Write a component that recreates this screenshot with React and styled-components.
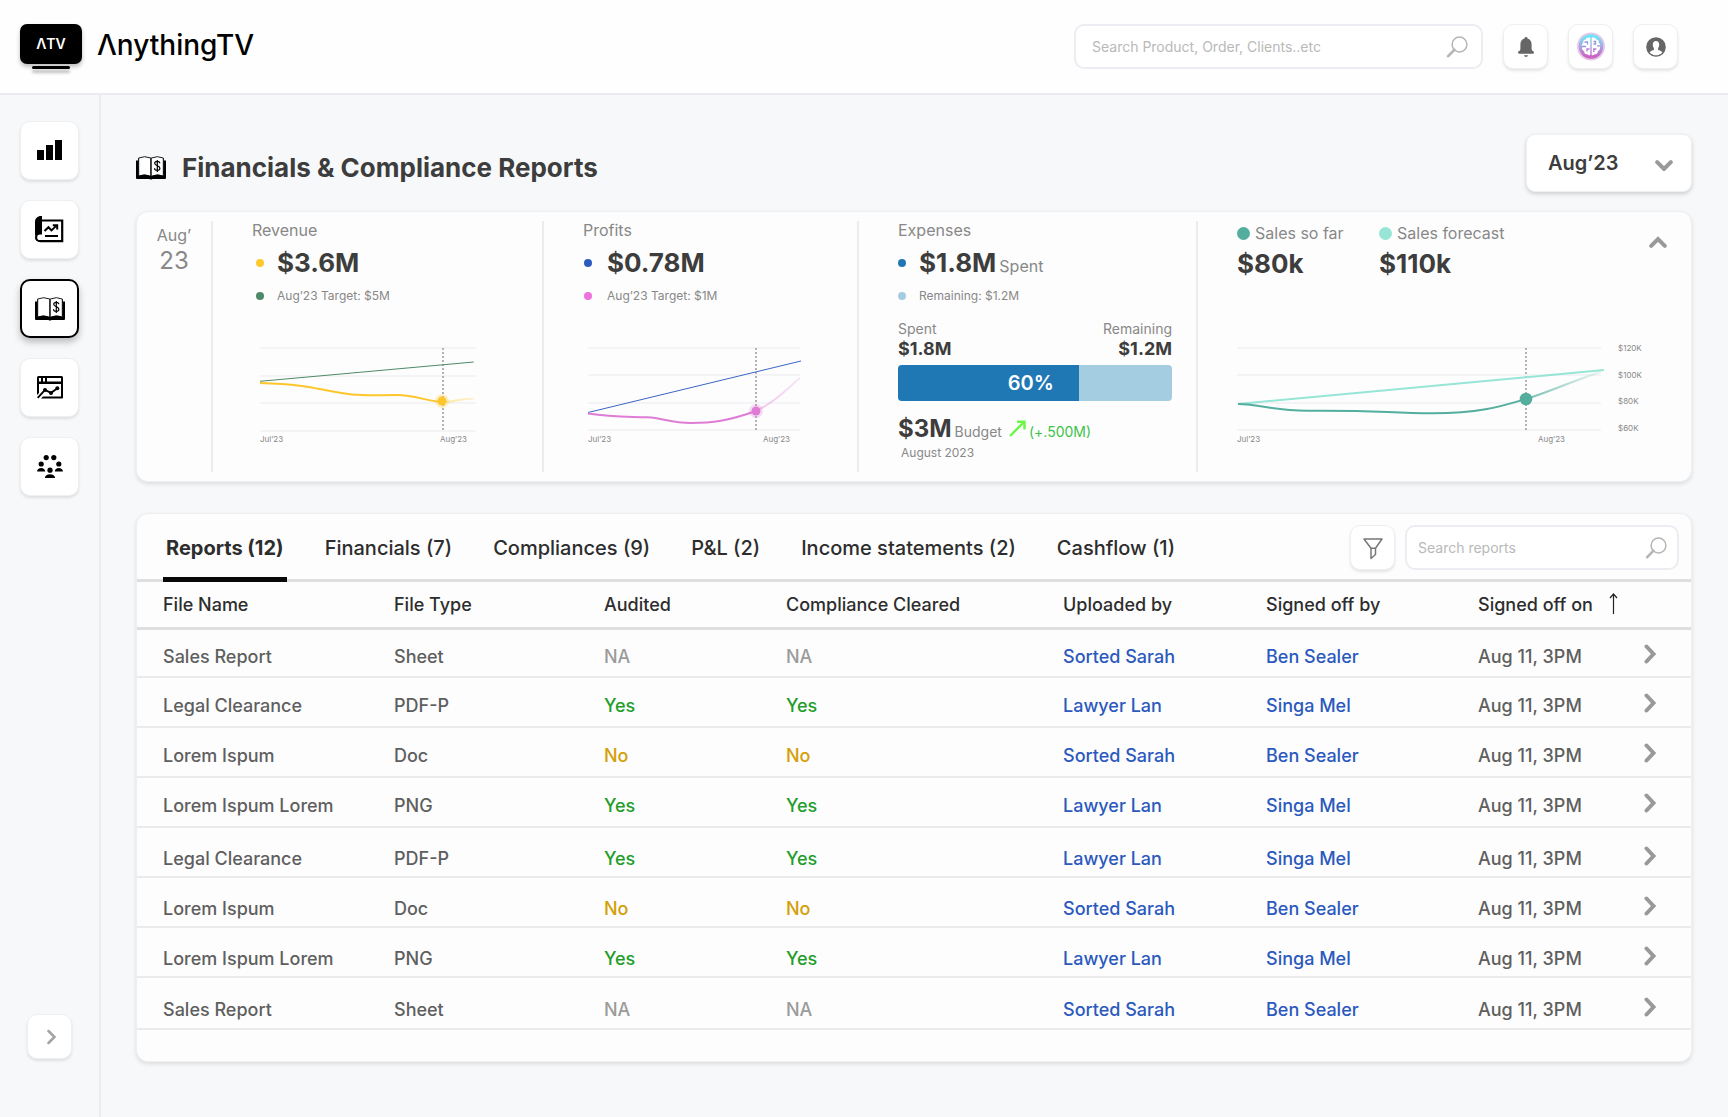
import React, { useState } from "react";
import styled, { createGlobalStyle, css } from "styled-components";

const GlobalStyle = createGlobalStyle`
  *, *::before, *::after { box-sizing: border-box; }
  body {
    margin: 0;
    background: #f7f8fa;
    color: #3d3d3d;
    font-family: Inter, "Liberation Sans", sans-serif;
  }
  button, input, select { font-family: inherit; }
  h1, p { margin: 0; }
`;

const raised = css`
  background: #fff;
  border: 1px solid #eeeff1;
  box-shadow: 0 2px 3px rgba(0, 0, 0, 0.1);
`;

/* ---------- page frame ---------- */

const Header = styled.header`
  display: flex;
  align-items: center;
  gap: 20px;
  height: 95px;
  padding: 0 50px 0 20px;
  background: #fefefe;
  border-bottom: 2px solid #ebecf0;
`;

const Brand = styled.a`
  display: flex;
  align-items: center;
  gap: 15px;
  margin-right: auto;
  color: #000;
  text-decoration: none;
`;

const BrandName = styled.span`
  padding-bottom: 3px;
  font-size: 28px;
  font-weight: 500;
  line-height: 36px;
`;

const Logo = styled.span`
  display: flex;
  flex-direction: column;
  align-items: center;
  gap: 2px;
`;

const Screen = styled.span`
  display: flex;
  align-items: center;
  justify-content: center;
  width: 62px;
  height: 40px;
  border-radius: 7px;
  background: #000;
  color: #fff;
  font-size: 14px;
  font-weight: 600;
  line-height: 20px;
  box-shadow: 0 3px 4px rgba(0, 0, 0, 0.25);
`;

const Stand = styled.span`
  width: 38px;
  height: 3px;
  border-radius: 2px;
  background: #000;
  box-shadow: 0 4px 3px rgba(0, 0, 0, 0.25);
`;

const Shell = styled.div`
  display: flex;
  min-height: calc(100vh - 95px);
`;

const Sidebar = styled.nav`
  display: flex;
  flex: none;
  flex-direction: column;
  align-items: center;
  gap: 20px;
  width: 101px;
  padding: 26px 0 58px;
  border-right: 2px solid #ebecf0;
`;

const Spacer = styled.div`
  flex: 1;
`;

const NavButton = styled.button`
  ${raised}
  display: grid;
  place-items: center;
  width: 59px;
  height: 59px;
  padding: 0;
  border-radius: 10px;
  cursor: pointer;
  ${(p) =>
    p.$active &&
    css`
      border: 2px solid #000;
      box-shadow: 0 4px 7px rgba(0, 0, 0, 0.25);
    `}
`;

const SquareButton = styled.button`
  ${raised}
  display: grid;
  flex: none;
  place-items: center;
  width: 45px;
  height: 45px;
  padding: 0;
  border-radius: 10px;
  cursor: pointer;
`;

const Main = styled.main`
  flex: 1;
  min-width: 0;
  padding: 39px 36px 55px 35px;
`;

/* ---------- search ---------- */

const SearchBox = styled.label`
  display: flex;
  flex: none;
  align-items: center;
  width: ${(p) => p.$width}px;
  height: 45px;
  padding: 0 ${(p) => (p.$wide ? 13 : 10)}px 0 ${(p) => (p.$wide ? 16 : 11)}px;
  border: 2px solid #ecedf2;
  border-radius: 10px;
  background: #fff;
`;

const SearchInput = styled.input`
  flex: 1;
  min-width: 0;
  padding: 0;
  border: 0;
  outline: 0;
  background: none;
  color: #3d3d3d;
  font-size: 14px;
  line-height: 20px;
  &::placeholder { color: #b9b9b9; opacity: 1; }
`;

/* ---------- title ---------- */

const TitleRow = styled.div`
  display: flex;
  align-items: flex-end;
  justify-content: space-between;
  margin-bottom: 19px;
`;

const Title = styled.h1`
  display: flex;
  align-items: center;
  gap: 16px;
  height: 48px;
  font-size: 26px;
  font-weight: 700;
  line-height: 32px;
`;

const MonthPicker = styled.div`
  display: grid;
  align-items: center;
  > * { grid-area: 1 / 1; }
  > svg { justify-self: end; margin: 3px 19px 0 0; pointer-events: none; }
`;

const MonthSelect = styled.select`
  ${raised}
  appearance: none;
  width: 166px;
  height: 58px;
  padding: 0 44px 0 21px;
  border-radius: 9px;
  box-shadow: 0 2px 4px rgba(0, 0, 0, 0.17);
  color: #3d3d3d;
  font-size: 20px;
  font-weight: 600;
`;

/* ---------- summary ---------- */

const Card = styled.section`
  background: #fdfdfd;
  border: 1px solid #eeeff1;
  border-radius: 12px;
  box-shadow: 0 2px 4px rgba(0, 0, 0, 0.11);
`;

const Summary = styled(Card)`
  display: grid;
  grid-template-columns: 76fr 331fr 315fr 339fr 493fr;
  margin-bottom: 31px;
  padding: 9px 0;
`;

const Column = styled.div`
  min-width: 0;
  min-height: 251px;
  padding: 0 24px 0 39px;
  border-right: 2px solid #ececee;
  &:last-child { border-right: 0; }
`;

const DateColumn = styled(Column)`
  padding: 4px 0 0;
  color: #888;
  font-size: 24px;
  line-height: 32px;
  text-align: center;
`;

const Muted = styled.p`
  color: #888;
  font-size: ${(p) => p.$size || 16}px;
  line-height: 20px;
`;

const ColumnLabel = styled(Muted)`
  line-height: 18px;
`;

const Note = styled(Muted)`
  padding-left: 3px;
  line-height: 16px;
`;

const Figure = styled.p`
  display: flex;
  align-items: baseline;
  gap: 3px;
  color: #3d3d3d;
  font-size: ${(p) => p.$size || 26}px;
  font-weight: 700;
  line-height: 32px;
  > small {
    color: #888;
    font-size: ${(p) => p.$unit || 16}px;
    font-weight: 400;
    line-height: 20px;
  }
`;

const Metric = styled.div`
  display: grid;
  grid-template-columns: 8px 1fr;
  align-items: center;
  column-gap: ${(p) => p.$gap}px;
  row-gap: 7px;
  margin-top: 8px;
  padding-left: ${(p) => p.$inset}px;
`;

const Dot = styled.span`
  width: ${(p) => p.$size || 8}px;
  height: ${(p) => p.$size || 8}px;
  border-radius: 50%;
  background: ${(p) => p.$color};
`;

const ChartBlock = styled.div`
  display: flex;
  gap: 17px;
  margin-top: ${(p) => p.$top}px;
  padding-left: ${(p) => p.$inset}px;
`;

const Plot = styled.div`
  width: ${(p) => p.$width}px;
  > svg { display: block; width: 100%; height: 84px; overflow: visible; }
`;

const Axis = styled.div`
  display: flex;
  justify-content: space-between;
  margin-top: 2px;
  padding-right: ${(p) => p.$end}px;
  color: #888;
  font-size: 8px;
  line-height: 12px;
`;

const Scale = styled(Axis)`
  flex-direction: column;
  height: 92px;
  margin-top: -5px;
`;

const Between = styled.div`
  display: flex;
  justify-content: space-between;
  margin-top: 13px;
`;

const Amount = styled.div`
  display: flex;
  flex-direction: column;
  align-items: ${(p) => (p.$end ? "flex-end" : "flex-start")};
  color: #3d3d3d;
  font-size: 18px;
  font-weight: 700;
  line-height: 20px;
  ${Muted} { font-weight: 400; }
`;

const Track = styled.div`
  height: 36px;
  margin: 6px 0 12px;
  overflow: hidden;
  border-radius: 4px;
  background: #a5cde2;
`;

const Fill = styled.div`
  height: 100%;
  padding-right: 25px;
  background: #1f78b4;
  color: #fff;
  font-size: 20px;
  font-weight: 600;
  line-height: 36px;
  text-align: right;
`;

const Budget = styled(Figure)`
  > svg { margin: 0 0 0 4px; }
  > b { color: #3dc348; font-size: 14px; font-weight: 400; line-height: 20px; }
`;

const SalesTop = styled.div`
  display: flex;
  align-items: flex-start;
  justify-content: space-between;
  padding-top: 2px;
`;

const SalesStats = styled.div`
  display: grid;
  grid-template-columns: 142px auto;
  row-gap: 5px;
`;

const Legend = styled.p`
  display: flex;
  align-items: center;
  gap: 5px;
  color: #888;
  font-size: 16px;
  line-height: 20px;
`;

const BareButton = styled.button`
  display: inline-grid;
  place-items: center;
  padding: 0;
  border: 0;
  background: none;
  cursor: pointer;
`;

const CollapseButton = styled(BareButton)`
  margin: 13px 0 0;
`;

/* ---------- reports ---------- */

const TabBar = styled.div`
  display: flex;
  align-items: flex-end;
  gap: 10px;
  height: 68px;
  padding: 0 12px 0 26px;
  border-bottom: 3px solid #dedede;
`;

const Tabs = styled.div`
  display: flex;
  gap: 35px;
  margin: 0 auto -3px 0;
`;

const Tab = styled.button`
  height: 48px;
  padding: 0 3px 15px;
  border: 0;
  border-bottom: 5px solid ${(p) => (p.$active ? "#080808" : "transparent")};
  background: none;
  color: #2d2d2d;
  font-size: 20px;
  font-weight: ${(p) => (p.$active ? 700 : 500)};
  line-height: 28px;
  white-space: nowrap;
  cursor: pointer;
`;

const Tools = styled.div`
  display: flex;
  gap: 10px;
  margin-bottom: 9px;
`;

const Table = styled.table`
  width: 100%;
  margin-bottom: 31px;
  border-collapse: separate;
  border-spacing: 0;
  table-layout: fixed;
  font-size: 18px;
  font-weight: 500;
  line-height: 24px;
`;

const HeadCell = styled.th`
  height: 48px;
  padding: 0 0 0 26px;
  border-bottom: 3px solid #dedede;
  color: #2d2d2d;
  font-weight: 500;
  text-align: left;
  white-space: nowrap;
`;

const Sort = styled.span`
  display: inline-flex;
  align-items: flex-start;
  gap: 16px;
`;

const Batch = styled.tbody`
  td { padding-top: ${(p) => p.$drop}px; }
  &:first-of-type tr:first-child td { height: 48px; }
  &:last-of-type tr:last-child td { height: 52px; }
`;

const tones = { NA: "#9b9b9b", Yes: "#1f9d2b", No: "#d3a008" };

const Cell = styled.td`
  height: 50px;
  padding: 0 0 0 26px;
  border-bottom: 2px solid #ebebec;
  color: ${(p) => tones[p.$tone] || "#5f5f5f"};
  white-space: nowrap;
`;

const PersonLink = styled.a`
  color: #2b59bd;
  text-decoration: none;
`;

/* ---------- icons ---------- */

const SearchIcon = () => (
  <svg width="22" height="22" viewBox="0 0 22 22" fill="none" stroke="#b5b5b5" aria-hidden="true">
    <circle cx="13.5" cy="8.5" r="7.4" strokeWidth="1.5" />
    <path d="M8.3 13.8 2.2 20.2" strokeWidth="2.6" strokeLinecap="round" />
  </svg>
);

const BellIcon = () => (
  <svg width="16" height="20" viewBox="0 0 16 20" fill="#666" aria-hidden="true">
    <path d="M8 0a1.5 1.5 0 0 1 1.5 1.6C12.3 2.4 13.6 4.6 13.6 7.500v4.7l.7 1.500c.9.4 1.700 1 1.700 1.900 0 .9-.5 1.100-1.200 1.100H1.200C.5 16.700 0 16.500 0 15.600c0-.9.800-1.500 1.700-1.900l.7-1.500V7.500c0-2.900 1.300-5.100 4.100-5.900A1.500 1.500 0 0 1 8 0Z" />
    <path d="M6 18.200h4c-.2 1-1 1.700-2 1.700s-1.800-.7-2-1.700Z" />
  </svg>
);

const BrainIcon = () => (
  <svg width="30" height="30" viewBox="0 0 30 30" aria-hidden="true">
    <defs>
      <linearGradient id="orb" x1="0" y1="0" x2="0" y2="1">
        <stop offset="0.1" stopColor="#6fe3f7" />
        <stop offset="0.5" stopColor="#a6a6e3" />
        <stop offset="0.9" stopColor="#cb62c4" />
      </linearGradient>
    </defs>
    <circle cx="15" cy="14.500" r="14" fill="#dcb6dd" opacity="0.75" />
    <circle cx="15" cy="14.500" r="12.200" fill="url(#orb)" />
    <path fill="#fff" d="M14.300 5.800c-1.700-.9-4.200-.3-4.600 1.600-1.900.1-2.900 1.700-2.400 3.300-1.500 1-1.900 2.700-1.200 4.200-.4 1.900.4 3.500 2 4.100-.1 2.200 1.400 3.500 3.200 3.300.9 1 2 1.200 3 .7Z" />
    <path fill="#fff" d="M15.700 5.800c1.700-.9 4.200-.3 4.600 1.600 1.900.1 2.900 1.700 2.400 3.300 1.500 1 1.900 2.700 1.200 4.200.4 1.900-.4 3.500-2 4.100.1 2.200-1.400 3.500-3.200 3.300-.9 1-2 1.200-3 .7Z" />
    <path fill="none" stroke="#8f97dc" strokeWidth="1.300" d="M8.500 10h3v2.500M6 14.500h4M17.500 9.500h2v2.500h-2M24 13.800h-3" />
    <path fill="none" stroke="#b07ad0" strokeWidth="1.300" d="M13.500 17h-2.500v2.500M17.800 20v-3h2.500" />
  </svg>
);

const UserIcon = () => (
  <svg width="20" height="20" viewBox="0 0 20 20" aria-hidden="true">
    <circle cx="10" cy="10" r="9.800" fill="#666" />
    <path fill="#fff" d="M10 3.900c-2 0-3.200 1.500-3.200 3.500 0 1.700.6 3 1.100 3.700v1.900c-2 .4-3.400 1.200-4.200 2.400 1.500 1.800 3.700 2.900 6.300 2.900s4.800-1.100 6.300-2.900c-.8-1.200-2.200-2-4.200-2.400v-1.900c.5-.7 1.100-2 1.100-3.700 0-2-1.200-3.500-3.200-3.500Z" />
  </svg>
);

const BarsIcon = () => (
  <svg width="25" height="22" viewBox="0 0 25 22" aria-hidden="true">
    <path d="M0 10h7v10H0zM9 5h7v15H9zM18 0h7v20h-7z" />
  </svg>
);

const PlanIcon = () => (
  <svg width="29" height="27" viewBox="0 0 29 27" aria-hidden="true">
    <path d="M7 0v17.500H4.500L1 19.500C.3 19.800 0 19 0 18V6C0 2.500 2.500 0 6 0Z" />
    <path d="M7 4.500h20.200v20.700H5c-2.300 0-3.900-1.700-3.900-3.800 0-2.300 1.600-3.900 3.900-3.900h2" fill="none" stroke="#000" strokeWidth="2.200" />
    <path d="m9.500 15 4-3.800 3 3.200 5.200-5M17.800 9.200h4.400v4.300" fill="none" stroke="#000" strokeWidth="2" />
    <path d="M10 20h13" stroke="#000" strokeWidth="2" />
  </svg>
);

const LedgerIcon = () => (
  <svg width="30" height="24" viewBox="0 0 30 24" aria-hidden="true">
    <path d="M0 4.500h2V2.500h26v2h2V22q0 1-1 1H16.500q-1.500 1-3 0H1q-1 0-1-1Z" />
    <path d="M2.700 2Q8.500-.6 14.800 2v18.300Q8.500 17.500 2.700 20Z" fill="#fff" stroke="#000" strokeWidth="0.900" />
    <path d="M27.300 2Q21.500-.6 15.200 2v18.300q6.300-2.800 12.100-.3Z" fill="#fff" stroke="#000" strokeWidth="0.900" />
    <path d="M21.300 4v12M23.800 7.300c0-2.600-5.100-2.600-5.100 0 0 2.700 5.200 2 5.200 4.900 0 2.800-5.400 2.800-5.400 0" fill="none" stroke="#000" strokeWidth="1.200" />
  </svg>
);

const BrowserChartIcon = () => (
  <svg width="26" height="23" viewBox="0 0 26 23" aria-hidden="true">
    <path fillRule="evenodd" d="M1.500 0h23Q26 0 26 1.500v20q0 1-1 1H4l2-2h18V8H2v9l-2 2V1.500Q0 0 1.500 0ZM2 2v3.500h2V2Zm4 0v3.500h2V2Zm4 0v3.500h14V2Z" />
    <path d="m.7 21.800 7.300-8 6 3 6.500-4.500" fill="none" stroke="#000" strokeWidth="1.900" />
    <circle cx="8" cy="14" r="2" /><circle cx="14" cy="17" r="2" /><circle cx="20.300" cy="12.300" r="2" />
  </svg>
);

const TeamIcon = () => (
  <svg width="26" height="23" viewBox="0 0 26 23" aria-hidden="true">
    <circle cx="9.200" cy="2.600" r="2.600" /><circle cx="16.800" cy="2.600" r="2.600" />
    <circle cx="4.200" cy="9" r="2.600" /><circle cx="21.800" cy="9" r="2.600" />
    <circle cx="13" cy="15.200" r="2.600" />
    <path d="M0 16.500c.3-2.300 1.900-3.500 4.200-3.500s3.800 1.200 4 3.500ZM17.800 16.500c.2-2.300 1.700-3.500 4-3.500s3.900 1.200 4.200 3.500ZM7.800 23c.2-2.300 2.200-3.700 5.200-3.700s5 1.400 5.200 3.700Z" />
  </svg>
);

const FunnelIcon = () => (
  <svg width="20" height="24" viewBox="0 0 20 24" fill="none" stroke="#777" strokeWidth="1.500" strokeLinejoin="round" aria-hidden="true">
    <path d="M1 3h18l-6.500 9.300v6.200l-4.500 4V12.300ZM8 12.300h4.500" />
  </svg>
);

const Chevron = ({ dir, color = "#999", thick = 4 }) => {
  const shapes = {
    up: [18, 12, "M2.200 9.800 9 3l6.800 6.800"],
    down: [18, 12, "M2.200 3.200 9 10l6.800-6.800"],
    right: [12, 20, "M2.500 2.500 9.500 10l-7 7.500"],
    small: [13, 16, "M5.500 2 11.500 8l-6 6"],
  };
  const [w, h, d] = shapes[dir];
  return (
    <svg width={w} height={h} viewBox={`0 0 ${w} ${h}`} fill="none" stroke={color} strokeWidth={thick} strokeLinecap="round" aria-hidden="true">
      <path d={d} />
    </svg>
  );
};

const SortArrow = () => (
  <svg width="9" height="22" viewBox="0 0 9 22" fill="none" stroke="#222" strokeWidth="1.200" aria-hidden="true">
    <path d="M4.500 21V1M1 5l3.500-4L8 5" />
  </svg>
);

const GrowthArrow = () => (
  <svg width="17" height="17" viewBox="0 0 17 17" fill="none" stroke="#6bf745" strokeWidth="2.400" aria-hidden="true">
    <path d="M1 16 15 2M8 1.800h7.500V9.500" />
  </svg>
);

/* ---------- charts ---------- */

function LineChart({ id, width, rows, target, targetColor, targetWidth = 1, line, tail, color, marker, radius, now, glow }) {
  return (
    <svg viewBox={`0 0 ${width} 84`} aria-hidden="true">
      <defs>
        <linearGradient id={id} gradientUnits="userSpaceOnUse" x1={marker[0]} x2={width} y1="0" y2="0">
          <stop offset="0" stopColor={color} stopOpacity={glow ? 0.45 : 0.8} />
          <stop offset="1" stopColor={color} stopOpacity={glow ? 0.18 : 0.1} />
        </linearGradient>
      </defs>
      {rows.map((y) => (
        <path key={y} d={`M0 ${y}H${width}`} stroke="#f4f4f6" strokeWidth="2" />
      ))}
      <path d={`M${now} 1V84`} stroke="#b3b3b3" strokeWidth="2" strokeDasharray="2 2" />
      <path d={target} stroke={targetColor} strokeWidth={targetWidth} fill="none" />
      <path d={tail} stroke={`url(#${id})`} strokeWidth="2" fill="none" />
      <path d={line} stroke={color} strokeWidth="2" fill="none" />
      {glow && <circle cx={marker[0]} cy={marker[1]} r="7" fill={color} opacity="0.25" />}
      <circle cx={marker[0]} cy={marker[1]} r={radius} fill={color} />
    </svg>
  );
}

/* ---------- data ---------- */

const tabs = ["Reports (12)", "Financials (7)", "Compliances (9)", "P&L (2)", "Income statements (2)", "Cashflow (1)"];

const columns = [
  ["File Name", 231],
  ["File Type", 210],
  ["Audited", 182],
  ["Compliance Cleared", 277],
  ["Uploaded by", 203],
  ["Signed off by", 212],
];

const sales = ["Sales Report", "Sheet", "NA", "Sorted Sarah", "Ben Sealer"];
const legal = ["Legal Clearance", "PDF-P", "Yes", "Lawyer Lan", "Singa Mel"];
const doc = ["Lorem Ispum", "Doc", "No", "Sorted Sarah", "Ben Sealer"];
const png = ["Lorem Ispum Lorem", "PNG", "Yes", "Lawyer Lan", "Singa Mel"];

const batches = [
  { drop: 7, rows: [sales, legal, doc, png] },
  { drop: 14, rows: [legal, doc, png, sales] },
];

const navItems = [
  ["Dashboard", BarsIcon],
  ["Plans", PlanIcon],
  ["Financials", LedgerIcon],
  ["Performance", BrowserChartIcon],
  ["Teams", TeamIcon],
];

export default function App() {
  const [tab, setTab] = useState(0);
  const [nav, setNav] = useState(2);
  const spentShare = 66;

  return (
    <>
      <GlobalStyle />
      <Header>
        <Brand href="#">
          <Logo>
            <Screen>ΛTV</Screen>
            <Stand />
          </Logo>
          <BrandName>ΛnythingTV</BrandName>
        </Brand>
        <SearchBox $width={409} $wide>
          <SearchInput type="search" aria-label="Search" placeholder="Search Product, Order, Clients..etc" />
          <SearchIcon />
        </SearchBox>
        <SquareButton aria-label="Notifications"><BellIcon /></SquareButton>
        <SquareButton aria-label="Assistant"><BrainIcon /></SquareButton>
        <SquareButton aria-label="Account"><UserIcon /></SquareButton>
      </Header>

      <Shell>
        <Sidebar>
          {navItems.map(([label, Icon], i) => (
            <NavButton key={label} aria-label={label} $active={i === nav} onClick={() => setNav(i)}>
              <Icon />
            </NavButton>
          ))}
          <Spacer />
          <SquareButton aria-label="Expand sidebar"><Chevron dir="small" color="#a3a3a3" thick={2.5} /></SquareButton>
        </Sidebar>

        <Main>
          <TitleRow>
            <Title><LedgerIcon />Financials &amp; Compliance Reports</Title>
            <MonthPicker>
              <MonthSelect aria-label="Month" defaultValue="aug">
                <option value="aug">Aug’23</option>
              </MonthSelect>
              <Chevron dir="down" />
            </MonthPicker>
          </TitleRow>

          <Summary>
            <DateColumn>
              <Muted>Aug’</Muted>
              23
            </DateColumn>

            <Column>
              <ColumnLabel>Revenue</ColumnLabel>
              <Metric $inset={4} $gap={13}>
                <Dot $color="#fdc92f" />
                <Figure>$3.6M</Figure>
                <Dot $color="#4f8a68" />
                <Muted $size={12}>Aug’23 Target: $5M</Muted>
              </Metric>
              <ChartBlock $top={41} $inset={8}>
                <Plot $width={216}>
                  <LineChart
                    id="revenue" width={216} rows={[1, 29, 56, 84]} now={183} glow
                    target="M0 34.300 213.700 15" targetColor="#4f8a68"
                    color="#fdc62a" marker={[182, 54]} radius={4.5}
                    line="M0 36C18 37 30 37 47 39.700S75 46 92 47.500S118 48 137 48S165 54 182 55"
                    tail="M182 55C192 56 197 51.500 213.700 51.700"
                  />
                  <Axis $end={9}><span>Jul’23</span><span>Aug’23</span></Axis>
                </Plot>
              </ChartBlock>
            </Column>

            <Column>
              <ColumnLabel>Profits</ColumnLabel>
              <Metric $inset={1} $gap={15}>
                <Dot $color="#2c5cbf" />
                <Figure>$0.78M</Figure>
                <Dot $color="#ee72dd" />
                <Muted $size={12}>Aug’23 Target: $1M</Muted>
              </Metric>
              <ChartBlock $top={41} $inset={5}>
                <Plot $width={212}>
                  <LineChart
                    id="profit" width={212} rows={[1, 28, 56, 83]} now={168} glow
                    target="M0 65.500 213 14" targetColor="#3a66c4"
                    color="#df7cd6" marker={[168, 64]} radius={4.5}
                    line="M0 66.500C26 70.500 42 69.500 59 70.300S82 76 103 76S140 74 168 64"
                    tail="M168 64C188 54 194 46 212 31"
                  />
                  <Axis $end={10}><span>Jul’23</span><span>Aug’23</span></Axis>
                </Plot>
              </ChartBlock>
            </Column>

            <Column>
              <ColumnLabel>Expenses</ColumnLabel>
              <Metric $inset={0} $gap={13}>
                <Dot $color="#1f78b4" />
                <Figure>$1.8M<small>Spent</small></Figure>
                <Dot $color="#a5cde2" />
                <Muted $size={12}>Remaining: $1.2M</Muted>
              </Metric>
              <Between>
                <Amount><Muted $size={14}>Spent</Muted>$1.8M</Amount>
                <Amount $end><Muted $size={14}>Remaining</Muted>$1.2M</Amount>
              </Between>
              <Track><Fill style={{ width: `${spentShare}%` }}>60%</Fill></Track>
              <Budget $size={24} $unit={14}>$3M<small>Budget</small><GrowthArrow /><b>(+.500M)</b></Budget>
              <Note $size={12}>August 2023</Note>
            </Column>

            <Column>
              <SalesTop>
                <SalesStats>
                  <Legend><Dot $size={13} $color="#53ae9e" />Sales so far</Legend>
                  <Legend><Dot $size={13} $color="#97e5d6" />Sales forecast</Legend>
                  <Figure>$80k</Figure>
                  <Figure>$110k</Figure>
                </SalesStats>
                <CollapseButton aria-label="Collapse summary"><Chevron dir="up" /></CollapseButton>
              </SalesTop>
              <ChartBlock $top={67} $inset={0}>
                <Plot $width={364}>
                  <LineChart
                    id="sales" width={364} rows={[1, 28, 56, 83]} now={289}
                    target="M1 57 367 23" targetColor="#97e5d6" targetWidth={2}
                    color="#53ae9e" marker={[289, 52]} radius={6.3}
                    line="M1 57C24 57.500 38 63.700 70 63.700C142 63 150 66.300 196 66.300S262 60 289 52"
                    tail="M289 52C315 44 340 32 364 25"
                  />
                  <Axis $end={36}><span>Jul’23</span><span>Aug’23</span></Axis>
                </Plot>
                <Scale $end={0}>
                  <span>$120K</span><span>$100K</span><span>$80K</span><span>$60K</span>
                </Scale>
              </ChartBlock>
            </Column>
          </Summary>

          <Card>
            <TabBar>
              <Tabs role="tablist">
                {tabs.map((name, i) => (
                  <Tab key={name} role="tab" aria-selected={i === tab} $active={i === tab} onClick={() => setTab(i)}>
                    {name}
                  </Tab>
                ))}
              </Tabs>
              <Tools>
                <SquareButton aria-label="Filter reports"><FunnelIcon /></SquareButton>
                <SearchBox $width={274}>
                  <SearchInput type="search" aria-label="Search reports" placeholder="Search reports" />
                  <SearchIcon />
                </SearchBox>
              </Tools>
            </TabBar>

            <Table>
              <colgroup>
                {columns.map(([name, width]) => <col key={name} width={width} />)}
                <col width={166} />
                <col width={73} />
              </colgroup>
              <thead>
                <tr>
                  {columns.map(([name]) => <HeadCell key={name} scope="col">{name}</HeadCell>)}
                  <HeadCell scope="col" colSpan={2}><Sort>Signed off on<SortArrow /></Sort></HeadCell>
                </tr>
              </thead>
              {batches.map(({ drop, rows }) => (
                <Batch key={drop} $drop={drop}>
                  {rows.map(([file, type, state, uploader, signer]) => (
                    <tr key={file}>
                      <Cell>{file}</Cell>
                      <Cell>{type}</Cell>
                      <Cell $tone={state}>{state}</Cell>
                      <Cell $tone={state}>{state}</Cell>
                      <Cell><PersonLink href="#">{uploader}</PersonLink></Cell>
                      <Cell><PersonLink href="#">{signer}</PersonLink></Cell>
                      <Cell>Aug 11, 3PM</Cell>
                      <Cell><BareButton aria-label={`Open ${file}`}><Chevron dir="right" /></BareButton></Cell>
                    </tr>
                  ))}
                </Batch>
              ))}
            </Table>
          </Card>
        </Main>
      </Shell>
    </>
  );
}
